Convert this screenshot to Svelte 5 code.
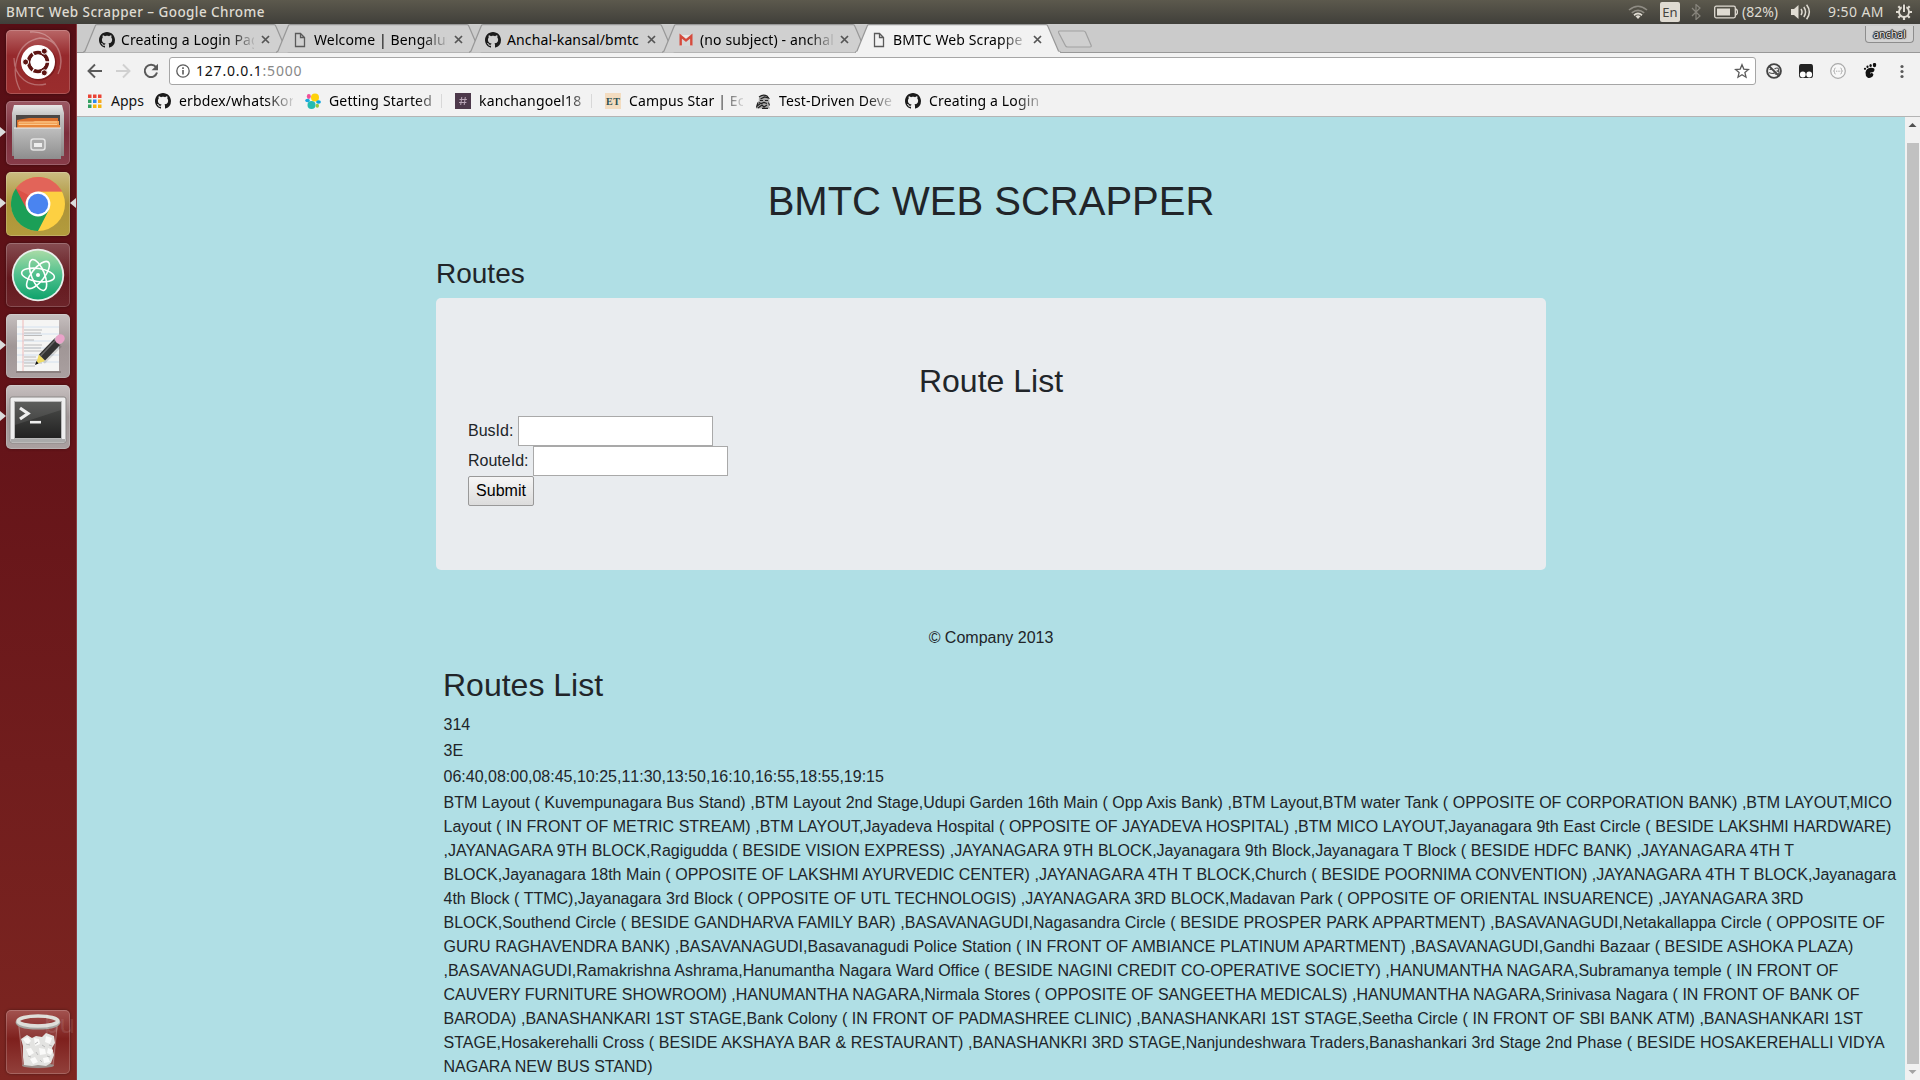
<script>
  const tabs = [
    { icon: 'github', title: 'Creating a Login Pag' },
    { icon: 'page', title: 'Welcome | Bengalur' },
    { icon: 'github', title: 'Anchal-kansal/bmtc', fits: true },
    { icon: 'gmail', title: '(no subject) - anchal' },
    { icon: 'page', title: 'BMTC Web Scrappe', active: true },
  ];
  const bookmarks = [
    { icon: 'github', title: 'erbdex/whatsKor' },
    { icon: 'elastic', title: 'Getting Started', bar: true },
    { icon: 'hash', title: 'kanchangoel18', bar: true },
    { icon: 'et', title: 'Campus Star | Ec' },
    { icon: 'goat', title: 'Test-Driven Deve' },
    { icon: 'github', title: 'Creating a Login' },
  ];
  const launchers = [
    { icon: 'ubuntu' },
    { icon: 'files', running: true },
    { icon: 'chrome', running: true, focused: true },
    { icon: 'atom' },
    { icon: 'editor', running: true },
    { icon: 'terminal', running: true },
  ];
  const rows = ['314', '3E', '06:40,08:00,08:45,10:25,11:30,13:50,16:10,16:55,18:55,19:15'];
  const stops = [
    'BTM Layout ( Kuvempunagara Bus Stand) ,BTM Layout 2nd Stage,Udupi Garden 16th Main ( Opp Axis Bank) ,BTM Layout,BTM water Tank ( OPPOSITE OF CORPORATION BANK) ,BTM LAYOUT,MICO',
    'Layout ( IN FRONT OF METRIC STREAM) ,BTM LAYOUT,Jayadeva Hospital ( OPPOSITE OF JAYADEVA HOSPITAL) ,BTM MICO LAYOUT,Jayanagara 9th East Circle ( BESIDE LAKSHMI HARDWARE)',
    ',JAYANAGARA 9TH BLOCK,Ragigudda ( BESIDE VISION EXPRESS) ,JAYANAGARA 9TH BLOCK,Jayanagara 9th Block,Jayanagara T Block ( BESIDE HDFC BANK) ,JAYANAGARA 4TH T',
    'BLOCK,Jayanagara 18th Main ( OPPOSITE OF LAKSHMI AYURVEDIC CENTER) ,JAYANAGARA 4TH T BLOCK,Church ( BESIDE POORNIMA CONVENTION) ,JAYANAGARA 4TH T BLOCK,Jayanagara',
    '4th Block ( TTMC),Jayanagara 3rd Block ( OPPOSITE OF UTL TECHNOLOGIS) ,JAYANAGARA 3RD BLOCK,Madavan Park ( OPPOSITE OF ORIENTAL INSUARENCE) ,JAYANAGARA 3RD',
    'BLOCK,Southend Circle ( BESIDE GANDHARVA FAMILY BAR) ,BASAVANAGUDI,Nagasandra Circle ( BESIDE PROSPER PARK APPARTMENT) ,BASAVANAGUDI,Netakallappa Circle ( OPPOSITE OF',
    'GURU RAGHAVENDRA BANK) ,BASAVANAGUDI,Basavanagudi Police Station ( IN FRONT OF AMBIANCE PLATINUM APARTMENT) ,BASAVANAGUDI,Gandhi Bazaar ( BESIDE ASHOKA PLAZA)',
    ',BASAVANAGUDI,Ramakrishna Ashrama,Hanumantha Nagara Ward Office ( BESIDE NAGINI CREDIT CO-OPERATIVE SOCIETY) ,HANUMANTHA NAGARA,Subramanya temple ( IN FRONT OF',
    'CAUVERY FURNITURE SHOWROOM) ,HANUMANTHA NAGARA,Nirmala Stores ( OPPOSITE OF SANGEETHA MEDICALS) ,HANUMANTHA NAGARA,Srinivasa Nagara ( IN FRONT OF BANK OF',
    'BARODA) ,BANASHANKARI 1ST STAGE,Bank Colony ( IN FRONT OF PADMASHREE CLINIC) ,BANASHANKARI 1ST STAGE,Seetha Circle ( IN FRONT OF SBI BANK ATM) ,BANASHANKARI 1ST',
    'STAGE,Hosakerehalli Cross ( BESIDE AKSHAYA BAR & RESTAURANT) ,BANASHANKRI 3RD STAGE,Nanjundeshwara Traders,Banashankari 3rd Stage 2nd Phase ( BESIDE HOSAKEREHALLI VIDYA',
    'NAGARA NEW BUS STAND)',
  ];
</script>

{#snippet favicon(name)}
  <svg class="fav" viewBox="0 0 16 16">
    {#if name === 'github'}
      <path fill="#1b1b1b" d="M8 0C3.58 0 0 3.58 0 8c0 3.54 2.29 6.53 5.47 7.59.4.07.55-.17.55-.38 0-.19-.01-.82-.01-1.49-2.01.37-2.53-.49-2.69-.94-.09-.23-.48-.94-.82-1.13-.28-.15-.68-.52-.01-.53.63-.01 1.08.58 1.23.82.72 1.21 1.87.87 2.33.66.07-.52.28-.87.51-1.07-1.78-.2-3.64-.89-3.64-3.95 0-.87.31-1.59.82-2.15-.08-.2-.36-1.02.08-2.12 0 0 .67-.21 2.2.82.64-.18 1.32-.27 2-.27.68 0 1.36.09 2 .27 1.53-1.04 2.2-.82 2.2-.82.44 1.1.16 1.92.08 2.12.51.56.82 1.27.82 2.15 0 3.07-1.87 3.75-3.65 3.95.29.25.54.73.54 1.48 0 1.07-.01 1.93-.01 2.2 0 .21.15.46.55.38A8.01 8.01 0 0016 8c0-4.42-3.58-8-8-8z" />
    {:else if name === 'page'}
      <path d="M3.5 1.5h5l4 4v9h-9zM8.5 1.5v4h4" fill="none" stroke="#5a5a5a" stroke-width="1.3" />
    {:else if name === 'gmail'}
      <path d="M2 3h12v11H2z" fill="#e8e8e8" /><path d="M4 14V7l4 3 4-3v7z" fill="#d5d5d5" />
      <path d="M2.700 13.500V4L8 8.500 13.300 4v9.500" fill="none" stroke="#d54b3d" stroke-width="2.400" />
    {:else if name === 'elastic'}
      <circle cx="10" cy="4.500" r="4" fill="#fed10a" /><circle cx="6.500" cy="12" r="4" fill="#24bbb1" />
      <ellipse cx="3.800" cy="3.500" rx="2" ry="2.400" fill="#ef5098" /><ellipse cx="2.500" cy="7.500" rx="2.300" ry="1.700" fill="#17a8e0" />
      <ellipse cx="13.500" cy="9" rx="2.400" ry="1.700" fill="#07a5de" /><ellipse cx="12.300" cy="12.800" rx="1.700" ry="2" fill="#93c83e" />
    {:else if name === 'hash'}
      <path fill="#4d394b" d="M0 0h16v16H0z" /><path d="M6.800 4L5.700 12M10.300 4L9.200 12M4.500 6.500h7.400M4 9.500h7.400" stroke="#b9a6b7" fill="none" />
    {:else if name === 'et'}
      <path fill="#f3dcc0" d="M0 0h16v16H0z" /><text x="8" y="12" text-anchor="middle" textLength="14" class="et">ET</text>
    {:else if name === 'goat'}
      <path d="M1 15.500q0-5 3-8-1-3 2-4.500 2-1.500 5-.500l3 2 .5 4-1.500 2 2 5z" fill="#aaa" />
      <path d="M4 4q4-3 8-1l1.500 2-4-1-4 2M5 7.500h3M10 7.500h3M4 9.500l2 1 3-1 3 1M2 13l3-2M3 15l4-3 2 2 3-2M7 15.300h6M13.500 9.500l1 3M1.500 14.500l1.500-5" fill="none" stroke="#222" stroke-width="1.200" />
    {/if}
  </svg>
{/snippet}

{#snippet launcher(name)}
  <svg class="glyph" viewBox="0 0 64 64">
    {#if name === 'ubuntu'}
      <path d="M14 60C4 40 10 12 34 8c22 2 24 24 18 36M24 2c20-2 34 18 30 36M8 28c0 20 16 30 32 26" fill="none" stroke="#fff" stroke-opacity=".3" stroke-width="1.300" />
      <circle cx="33" cy="33" r="17.500" fill="#400" opacity=".35" /><circle cx="32" cy="32" r="17" fill="#fff" />
      <circle cx="32" cy="32" r="9.400" fill="none" stroke="#5e1513" stroke-width="3.600" />
      <path d="M32 32H46M32 32l-7-12M32 32l-7 12" stroke="#fff" stroke-width="1.400" /><circle cx="32" cy="32" r="7.500" fill="#fff" />
      <g fill="#5e1513" stroke="#fff" stroke-width="1"><circle cx="19.600" cy="32" r="3" /><circle cx="38.300" cy="21.200" r="3" /><circle cx="38.300" cy="42.800" r="3" /></g>
    {:else if name === 'files'}
      <path d="M8 4h48l2 8v43H6V12z" fill="url(#silver)" /><path d="M10 14h44v20H10z" fill="#4b4644" />
      <path d="M11 19l12-2h29v10H11z" fill="#d96e2b" /><path d="M12 21h15l2-1h24v7H12z" fill="#f3a257" /><path d="M12 24h42v3H12z" fill="#e88638" />
      <path d="M13 21h38M13 23.500h38" stroke="#fcd29b" stroke-width=".8" />
      <path d="M8 27h47v31H8z" fill="url(#steel)" /><path d="M8 27h47" stroke="#eee" />
      <rect x="25" y="38" width="14" height="11" rx="2.500" fill="#aaa" stroke="#e3e3e3" stroke-width="1.500" /><path d="M28 42h8v4h-8z" fill="#eee" />
    {:else if name === 'chrome'}
      <circle cx="32" cy="32" r="27" fill="#fdd042" />
      <path d="M32 32L9.800 16.600A27 27 0 0 0 32 59L42.700 38.200z" fill="#1b9f57" />
      <path d="M9.800 16.600A27 27 0 0 1 56 19.600H32L21.300 38.200z" fill="#dc5146" /><path d="M9.800 16.600A27 27 0 0 1 56 19.600H32L28 26z" fill="#e8776c" opacity=".5" />
      <circle cx="32" cy="32" r="12.400" fill="#fff" /><circle cx="32" cy="32" r="10.200" fill="#4a84f0" />
    {:else if name === 'atom'}
      <circle cx="32" cy="32" r="26.200" fill="#e9eeeb" /><circle cx="32" cy="32" r="24.400" fill="url(#green)" />
      <g fill="none" stroke="#fff" stroke-width="1.600"><ellipse cx="32" cy="32" rx="16.500" ry="6.500" transform="rotate(8 32 32)" /><ellipse cx="32" cy="32" rx="16.500" ry="6.500" transform="rotate(68 32 32)" /><ellipse cx="32" cy="32" rx="16.500" ry="6.500" transform="rotate(128 32 32)" /></g>
      <circle cx="32" cy="32" r="2" fill="#fff" />
    {:else if name === 'editor'}
      <path d="M10 57h45v2H10z" fill="#8b8180" /><path d="M11 6h42v51H11z" fill="#f5f5f4" />
      <path d="M11 13h42M11 20h42M11 27h42M11 34h42M11 41h42M11 48h42" stroke="#cbdcef" stroke-width=".8" /><path d="M17 6v51" stroke="#eaa" stroke-width=".8" />
      <path d="M18 16h18M18 19h17M18 21.500h18M18 26h10M18 31h18M18 34h17M18 37h18M18 43h12M18 46h20M18 49h18M18 52h11" stroke="#bbb" stroke-width="1.200" />
      <path d="M36 47L53 30" stroke="#0002" stroke-width="8" />
      <path d="M30 50l3-10 6 7z" fill="#f1dc62" /><path d="M29 51l1.500-4 2 2.500z" fill="#111" />
      <path d="M36 43.500L52 27" stroke="#333" stroke-width="8.500" /><path d="M34.500 42L50.500 25" stroke="#666" stroke-width="1.500" />
      <path d="M51 28l3-3" stroke="#bbb" stroke-width="8.500" /><path d="M53.500 25.500l1-1" stroke="#e9a3c9" stroke-width="8.500" stroke-linecap="round" />
    {:else if name === 'terminal'}
      <rect x="4" y="12" width="56" height="46" rx="2" fill="#eee" stroke="#8b8887" /><path d="M5 54h54v3H5z" fill="#aaa" />
      <rect x="8" y="16" width="48" height="38" fill="#b8b8b8" /><rect x="9" y="17" width="46" height="36" fill="url(#dark)" />
      <path d="M9 17h46v8L9 40z" fill="#fff" opacity=".09" />
      <path d="M14 23l8 5.500-8 5.500" fill="none" stroke="#eee" stroke-width="3.200" /><path d="M24 37.200h11" stroke="#eee" stroke-width="2.600" />
    {:else if name === 'trash'}
      <path d="M12 14l4 42q16 5 32 0l4-42z" fill="#fff" opacity=".1" /><path d="M13 17l4 38M51 17l-4 38" stroke="#fff" opacity=".25" />
      <ellipse cx="32" cy="55.500" rx="16" ry="2.500" fill="#9a918d" />
      <path d="M17 36l-2-7 6-4 5 3 4-2 6 1 4-4 8 3 1 7-3 5 2 7-3 8-5 3-8-1-6 1-8-1-1-8z" fill="#e3e3e1" />
      <path d="M17 29l5-2 3 4-4 4zM28 28l5 1 1 5-5 2zM40 26l6 2-2 6-5-2zM20 39l5-1 3 5-5 3zM33 38l6 1 1 5-6 1zM42 38l5 2-2 5-4-2zM24 49l5-2 3 5-5 2zM37 48l5-1 2 5-6 1z" fill="#fafaf9" />
      <path d="M20 34l4 1M29 34l3-2M36 35l3 2M30 42l2 3M22 46l3 1M43 35l3 1M34 50l2 2M41 46l3 1" stroke="#bbb" />
      <path d="M12 11.500q0 5.500 20 5.500t20-5.500" fill="none" stroke="#a5a5a0" stroke-width="5" /><ellipse cx="32" cy="11" rx="20" ry="5" fill="none" stroke="#deded9" stroke-width="3.600" />
    {/if}
  </svg>
{/snippet}

<svg class="defs" width="0" height="0">
  <defs>
    <linearGradient id="silver" x2="0" y2="1"><stop stop-color="#e8e8e8" /><stop offset=".2" stop-color="#c4c4c4" /><stop offset="1" stop-color="#8a8484" /></linearGradient>
    <linearGradient id="steel" x2="0" y2="1"><stop stop-color="#bebebe" /><stop offset="1" stop-color="#8e8e8e" /></linearGradient>
    <linearGradient id="green" x2="0" y2="1"><stop stop-color="#a8dba6" /><stop offset=".5" stop-color="#4fc08d" /><stop offset="1" stop-color="#0fa36c" /></linearGradient>
    <linearGradient id="dark" x2="0" y2="1"><stop stop-color="#4c4d4b" /><stop offset="1" stop-color="#222" /></linearGradient>
  </defs>
</svg>

<div class="screen">
  <header class="panel">
    <span class="title">BMTC Web Scrapper – Google Chrome</span>
    <div class="tray">
      <svg class="wifi" viewBox="0 0 20 14"><path d="M1 5q9-7.500 18 0M3.800 7.800q6.200-5 12.400 0" fill="none" stroke="#8f8c84" stroke-width="1.600" /><path d="M6 10.200q4-3.400 8 0" fill="none" stroke="#dfdbd2" stroke-width="1.800" /><path d="M7.500 11.200q2.500-1.800 5 0L10 14z" fill="#dfdbd2" /></svg>
      <span class="lang">En</span>
      <svg class="bt" viewBox="0 0 10 16"><path d="M1 4l8 8-4 3.500V.500L9 4l-8 8" fill="none" stroke="#88857d" stroke-width="1.200" /></svg>
      <svg class="bat" viewBox="0 0 24 14"><rect x=".7" y="1.200" width="20.600" height="11.600" rx="1.500" fill="none" stroke="#dfdbd2" stroke-width="1.300" /><path d="M3 3.500h13v7H3z" fill="#dfdbd2" /><path d="M21.500 4q2 .5 2 3t-2 3" fill="none" stroke="#dfdbd2" stroke-width="1.300" /></svg>
      <span class="pct">(82%)</span>
      <svg class="vol" viewBox="0 0 20 16"><path d="M0 5h3l4.500-4v14L3 11H0z" fill="#dfdbd2" /><path d="M10 5q2 3 0 6M12.800 3q3.500 5 0 10M15.600.8q5.500 7.200 0 14.400" fill="none" stroke="#dfdbd2" stroke-width="1.500" /></svg>
      <span class="clock">9:50 AM</span>
      <svg class="gear" viewBox="0 0 16 16"><circle cx="8" cy="8" r="5" fill="none" stroke="#dfdbd2" stroke-width="1.900" /><path d="M0 8h3M13 8h3M8 13v3M2.300 2.300l2 2M13.700 2.300l-2 2M2.300 13.700l2-2M13.700 13.700l-2-2" stroke="#dfdbd2" stroke-width="2.200" /><path d="M8 0v9" stroke="#48463f" stroke-width="4.500" /><path d="M8 .5v7.500" stroke="#dfdbd2" stroke-width="2" /></svg>
    </div>
  </header>

  <div class="desktop">
    <nav class="dock">
      {#each launchers as l}
        <div class="tile {l.icon}">
          {@render launcher(l.icon)}
          {#if l.running}<i class="run"></i>{/if}
          {#if l.focused}<i class="focus"></i>{/if}
        </div>
      {/each}
      <div class="tile trash">{@render launcher('trash')}<span class="wall">bu</span></div>
    </nav>

    <section class="browser">
      <div class="strip">
        {#each tabs as t}
          <div class="tab" class:active={t.active}>
            <svg class="shape" viewBox="0 0 206 29"><path d="M0 28.500L2 27 12 2.500Q12.500.7 14 .7H191Q192.300.7 193 2.500L203.500 27 206 28.500" fill={t.active ? '#f2f2f2' : '#d0d0d0'} stroke="#989898" stroke-width="1.200" />{#if t.active}<path d="M1 28.500h204" stroke="#f2f2f2" stroke-width="1.600" />{/if}</svg>
            {@render favicon(t.icon)}
            <span class="tabtext" class:fits={t.fits}>{t.title}</span>
            <svg class="close" viewBox="0 0 9 9"><path d="M1 1l7 7M8 1L1 8" stroke="#555" stroke-width="1.700" /></svg>
          </div>
        {/each}
        <svg class="newtab" viewBox="0 0 36 19"><path d="M2.500 1h24q1.500 0 2 1.200l5.600 13q.7 1.800-1.100 1.800H10.500q-1.500 0-2-1.200L1.800 3Q1 1 2.500 1z" fill="#cfcfcf" stroke="#a2a2a2" stroke-width="1.200" /></svg>
        <span class="profile">anchal</span>
      </div>

      <div class="toolbar">
        <svg class="nav" viewBox="0 0 16 16"><path d="M15 8H2M8 1.500L1.500 8 8 14.500" fill="none" stroke="#5a5a5a" stroke-width="1.900" /></svg>
        <svg class="nav" viewBox="0 0 16 16"><path d="M1 8h13M8 1.500L14.500 8 8 14.500" fill="none" stroke="#d0d0d0" stroke-width="1.900" /></svg>
        <svg class="nav" viewBox="0 0 16 16"><path d="M13 4.200A6.200 6.200 0 1 0 14 9.500" fill="none" stroke="#5a5a5a" stroke-width="2" /><path d="M15 .8v6.400H8.600z" fill="#5a5a5a" /></svg>
        <div class="omnibox">
          <svg class="info" viewBox="0 0 14 14"><circle cx="7" cy="7" r="6.200" fill="none" stroke="#5a5a5a" stroke-width="1.300" /><path d="M7 6v4.500M7 3.300v1.600" stroke="#5a5a5a" stroke-width="1.600" /></svg>
          <span class="url">127.0.0.1<em>:5000</em></span>
          <svg class="star" viewBox="0 0 16 16"><path d="M8 1.700l1.800 4.400 4.700.4-3.600 3.100 1.100 4.600L8 11.700l-4 2.500 1.100-4.600L1.500 6.500l4.700-.4z" fill="none" stroke="#5a5a5a" stroke-width="1.300" /></svg>
        </div>
        <div class="exts">
          <svg viewBox="0 0 16 16"><circle cx="8" cy="8" r="6.900" fill="none" stroke="#444" stroke-width="1.900" /><path d="M3 3l10 10" stroke="#444" stroke-width="1.800" /><path d="M3.500 6.500h3M3 9.500q4 2 6 0M8.500 6q3-2 4 0t-2 2q3 0 2.500 2t-4 1" fill="none" stroke="#555" stroke-width="1.200" /></svg>
          <svg viewBox="0 0 16 16"><path d="M3 1h10q2 0 2 3v8q0 3-2 3H3q-2 0-2-3V4q0-3 2-3z" fill="#232323" /><circle cx="4.800" cy="11.500" r="2.900" fill="#fff" /><circle cx="11.200" cy="11.500" r="2.900" fill="#fff" /></svg>
          <svg viewBox="0 0 16 16"><circle cx="8" cy="8" r="7.300" fill="#f8f8f8" stroke="#aaa" stroke-width="1.200" /><path d="M5.500 5Q4.500 5 4.500 6.500T3.500 8q1 0 1 1.500t1 1.500M10.500 5q1 0 1 1.500t1 1.500q-1 0-1 1.500t-1 1.500M6 8.200h1M7.700 8.200h1M9.300 8.200h1" fill="none" stroke="#aaa" /></svg>
          <svg viewBox="0 0 16 16"><path d="M12.500 6.500q0 3-3.500 3-1.500 0-.8 1.200.8-1 2.300-.5 1.700 1 .3 3Q8 16 5.500 14.500 3.300 13 3.500 9.500 4 5.300 8.500 4.700q4-.3 4 1.800z" fill="#111" /><ellipse cx="12.500" cy="2" rx="1.700" ry="2.200" fill="#111" /><ellipse cx="8.600" cy="2.500" rx="1.200" ry="1.500" fill="#111" /><ellipse cx="5.500" cy="3.800" rx="1.100" ry="1.300" fill="#111" /><circle cx="3" cy="5.800" r="1.100" fill="#111" /></svg>
          <svg viewBox="0 0 16 16"><g fill="#5a5a5a"><circle cx="8" cy="3.500" r="1.600" /><circle cx="8" cy="8.500" r="1.600" /><circle cx="8" cy="13.500" r="1.600" /></g></svg>
        </div>
      </div>

      <div class="marks">
        <svg class="apps" viewBox="0 0 14 14"><path d="M0 .5h3.500V4H0zM5 .5h3.500V4H5zM10 .5h3.500V4H10z" fill="#ea4335" /><path d="M0 5.500h3.500V9H0z" fill="#34a060" /><path d="M5 5.500h3.500V9H5z" fill="#2c87f0" /><path d="M10 5.500h3.500V9H10z" fill="#f6a81c" /><path d="M0 10.500h3.500V14H0z" fill="#34a060" /><path d="M5 10.500h3.500V14H5zM10 10.500h3.500V14H10z" fill="#f6b50c" /></svg>
        <span class="appstext">Apps</span>
        {#each bookmarks as b}
          <div class="mark">{@render favicon(b.icon)}<span class="marktext">{b.title}</span>{#if b.bar}<i class="bar"></i>{/if}</div>
        {/each}
      </div>

      <div class="view">
        <main class="page">
          <div class="container">
            <h1>BMTC WEB SCRAPPER</h1>
            <h3>Routes</h3>
            <div class="jumbotron">
              <h2>Route List</h2>
              <form>
                <div class="field"><label for="bus">BusId:</label><input id="bus" type="text" /></div>
                <div class="field"><label for="route">RouteId:</label><input id="route" type="text" /></div>
                <button type="button">Submit</button>
              </form>
            </div>
            <footer>© Company 2013</footer>
          </div>
          <div class="results">
            <h2>Routes List</h2>
            {#each rows as r}<div class="row">{r}</div>{/each}
            <div class="stops">{#each stops as s}<div>{s}</div>{/each}</div>
          </div>
        </main>
        <div class="scroll">
          <svg viewBox="0 0 15 16"><path d="M3.500 10h8L7.500 6z" fill="#505050" /></svg>
          <div class="thumb"></div>
          <svg viewBox="0 0 15 16"><path d="M3.500 6h8l-4 4z" fill="#a3a3a3" /></svg>
        </div>
      </div>
    </section>
  </div>
</div>

<style>
  :global(body) { margin: 0; overflow: hidden; }
  * { box-sizing: border-box; }
  svg { display: block; flex: none; }
  .defs { position: absolute; }
  .screen { width: 1920px; height: 1080px; display: flex; flex-direction: column; overflow: hidden; font-family: "Noto Sans", sans-serif; font-size: 14px; color: #111; }
  .panel { height: 24px; flex: none; display: flex; justify-content: space-between; align-items: center; padding: 0 8px 0 6px; color: #dfdbd2; background: linear-gradient(#5c594d, #403f3a); white-space: nowrap; }
  .title { font-weight: 500; line-height: 24px; font-size: 13.5px; letter-spacing: .43px; }
  .tray { display: flex; align-items: center; height: 24px; }
  .wifi { width: 20px; height: 14px; margin-right: 12px; }
  .lang { width: 20px; height: 20px; background: #dfdbd2; color: #45443f; border-radius: 2px; text-align: center; font-size: 13px; line-height: 20px; margin-right: 11px; }
  .bt { width: 10px; height: 16px; margin-right: 13px; }
  .bat { width: 24px; height: 14px; margin-right: 4px; }
  .pct { width: 37px; margin-right: 12px; line-height: 24px; }
  .vol { width: 20px; height: 16px; margin-right: 17px; }
  .clock { width: 56px; margin-right: 12px; line-height: 24px; letter-spacing: .4px; }
  .gear { width: 16px; height: 16px; }
  .desktop { flex: 1; display: flex; min-height: 0; }
  .dock { width: 77px; flex: none; display: flex; flex-direction: column; gap: 7px; padding: 6px 6px; background: linear-gradient(#560e15, #651419 40%, #7d2621); border-right: 1px solid #8a3b40; overflow: hidden; }
  .tile { width: 64px; height: 64px; flex: none; position: relative; border-radius: 5px; box-shadow: inset 0 0 0 1px #ffffff30, 0 0 3px #0006; background: linear-gradient(#ffffff40, #ffffff08 55%, #ffffff14); }
  .tile.ubuntu { background: linear-gradient(#b96767, #96292c 40%, #9a2d2d); }
  .tile.files { background: linear-gradient(#9b5964, #7c2d3b 50%, #873c49); }
  .tile.chrome { background: linear-gradient(#cbbd82, #ad9338 50%, #b39c3d); }
  .tile.editor, .tile.terminal { background: linear-gradient(#c7c0c0, #a09696 50%, #aaa0a0); }
  .tile.trash { margin-top: auto; background: linear-gradient(#a35350, #7e201d 45%, #92403b); }
  .glyph { width: 64px; height: 64px; }
  .run, .focus { position: absolute; top: 26px; width: 0; height: 0; border: 5px solid transparent; }
  .run { left: -6px; border-left: 6px solid #dcdcdc; border-right: 0; }
  .focus { right: -6px; border-right: 6px solid #dcdcdc; border-left: 0; }
  .wall { position: absolute; left: 38px; top: -4px; font-size: 25px; color: #ffffff1c; }
  .browser { flex: 1; min-width: 0; display: flex; flex-direction: column; background: #f2f2f2; }
  .strip { height: 29px; flex: none; display: flex; align-items: flex-start; padding-left: 6px; background: linear-gradient(#cbcbcb 28px, #989898 28px); }
  .tab { width: 206px; height: 29px; flex: none; margin-right: -13px; position: relative; display: flex; align-items: center; padding: 2px 0 0 16px; }
  .active { z-index: 1; }
  .shape { position: absolute; inset: 0; width: 206px; height: 29px; }
  .fav { width: 16px; height: 16px; position: relative; }
  .tabtext { width: 133px; margin-left: 6px; overflow: hidden; position: relative; white-space: nowrap; line-height: 22px; color: #000; letter-spacing: .12px; mask-image: linear-gradient(90deg, #000 108px, transparent 136px); }
  .tabtext.fits { mask-image: none; overflow: visible; }
  .close { width: 9px; height: 9px; margin-left: 7px; position: relative; }
  .newtab { width: 36px; height: 19px; margin: 6px 0 0 9px; }
  .profile { margin: 2px 6px 0 auto; width: 49px; height: 17px; border: 1px solid #8d8d8d; border-top: 0; border-radius: 0 0 4px 4px; background: #d3d3d3; text-align: center; font-size: 10.500px; line-height: 17px; color: #eee; text-shadow: 0 0 1px #222, 0 0 1px #222, 0 1px 1px #222, 0 -1px 1px #222, 1px 0 1px #222, -1px 0 1px #222; }
  .toolbar { height: 32px; padding-top: 4px; flex: none; display: flex; align-items: center; padding-left: 10px; }
  .nav { width: 16px; height: 16px; margin-right: 12px; }
  .omnibox { width: 1587px; height: 28px; margin-left: -2px; flex: none; display: flex; align-items: center; background: #fff; border: 1px solid #a6a6a6; border-radius: 3px; padding: 0 5px 0 6px; }
  .info { width: 14px; height: 14px; margin-right: 6px; }
  .url { flex: 1; color: #111; line-height: 26px; letter-spacing: .8px; }
  .url em { font-style: normal; color: #888; }
  .star { width: 16px; height: 16px; }
  .exts { display: flex; gap: 16px; margin-left: 10px; }
  .exts svg { width: 16px; height: 16px; }
  .marks { height: 32px; flex: none; display: flex; align-items: center; padding-left: 11px; border-bottom: 1px solid #b4b4b4; }
  .apps { width: 14px; height: 14px; margin-right: 9px; }
  .appstext { width: 44px; line-height: 22px; }
  .mark { width: 150px; flex: none; display: flex; align-items: center; }
  .marktext { width: 114px; margin-left: 8px; overflow: hidden; white-space: nowrap; line-height: 22px; color: #000; letter-spacing: .15px; mask-image: linear-gradient(90deg, #000 86px, transparent 118px); }
  .bar { width: 1px; height: 14px; background: #d8d8d8; margin-left: -2px; }
  .et { font: bold 10px "Liberation Serif", serif; fill: #2c5050; }
  .view { flex: 1; min-height: 0; display: flex; background: #b0e0e6; }
  .page { width: 1828px; flex: none; background: #b0dfe5; color: #212529; font: 16px/24px "Liberation Sans", sans-serif; overflow: hidden; }
  .container { width: 1110px; margin: 0 auto; padding-top: 60px; }
  h1, h2, h3 { margin: 0 0 8px; line-height: 1.2; font-weight: 400; }
  h1 { font-size: 40px; text-align: center; margin-bottom: 32px; }
  h2 { font-size: 32px; }
  h3 { font-size: 28px; margin-bottom: 7.400px; }
  .jumbotron { height: 272px; padding: 64px 32px; background: #e9ecef; border-radius: 5px; }
  .jumbotron h2 { text-align: center; margin-bottom: 15.600px; }
  .field { display: flex; height: 30px; line-height: 29px; }
  label { margin-right: 4.500px; }
  input { width: 195px; height: 30px; border: 1px solid #a9a9a9; padding: 1px; background: #fff; }
  button { display: block; width: 66px; height: 30px; padding: 0; font: 16px "Liberation Sans", sans-serif; color: #000; border: 1px solid #999; border-radius: 2px; background: linear-gradient(#f6f6f6, #dcdcdc); }
  footer { margin-top: 56px; text-align: center; }
  .results { padding: 16px 0 0 366px; white-space: nowrap; }
  .results h2 { margin-bottom: 8.600px; }
  .row { height: 26px; font-kerning: none; padding-left: .5px; }
  .stops { word-spacing: .13px; padding-left: .5px; }
  .scroll { width: 15px; flex: none; display: flex; flex-direction: column; background: #f1f1f1; }
  .scroll svg { width: 15px; height: 16px; }
  .thumb { flex: 1; margin: 10px 1px 0 2px; background: #c1c1c1; }
</style>
